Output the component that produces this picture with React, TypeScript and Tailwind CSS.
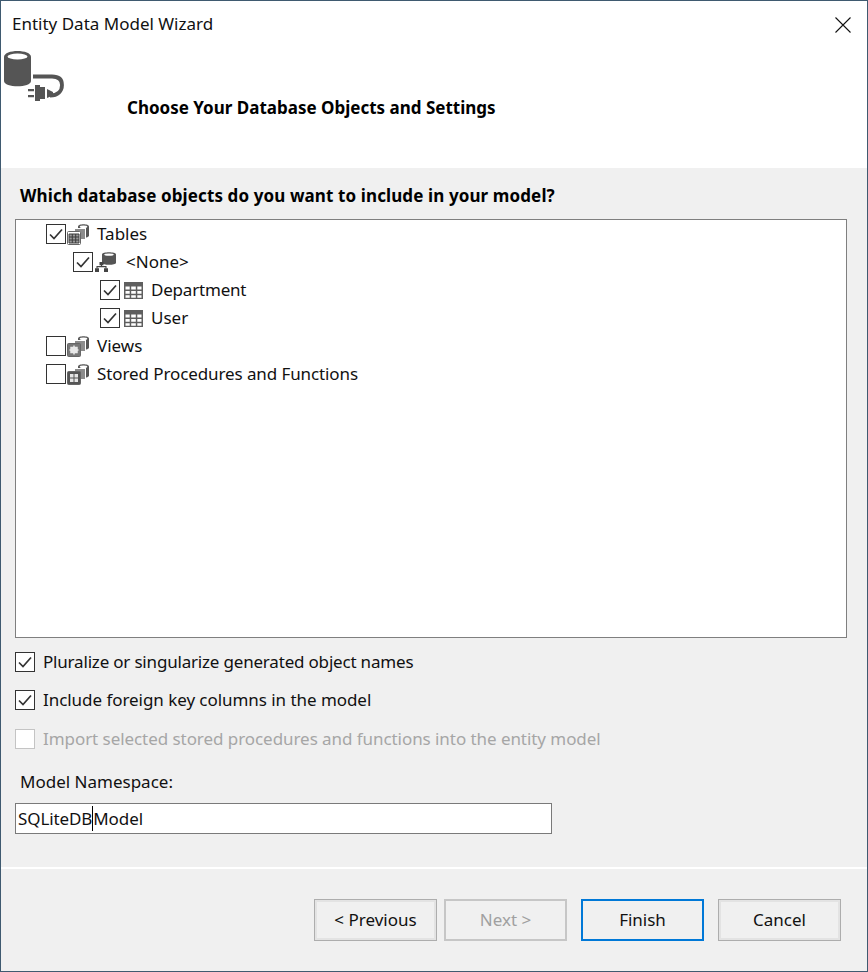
const font = { fontFamily: '"Noto Sans", "Open Sans", sans-serif' };

function Check({ checked = false, disabled = false }: { checked?: boolean; disabled?: boolean }) {
  return (
    <span className={`flex h-5 w-5 shrink-0 items-center justify-center border bg-white ${disabled ? 'border-[#c4c4c4]' : 'border-[#333333]'}`}>
      {checked && (
        <svg width="14" height="12" viewBox="0 0 14 12" fill="none">
          <path d="M1 6.5 L5 10.5 L13 1.5" stroke="#333333" strokeWidth="1.7" />
        </svg>
      )}
    </span>
  );
}

function DbSmall({ width = 11, height = 14 }: { width?: number; height?: number }) {
  return (
    <svg className="absolute right-0 top-0" width={width} height={height} viewBox="0 0 11 14" preserveAspectRatio="none">
      <path d="M0 2.5C0 -.5 11 -.5 11 2.5V11.5C11 14.5 0 14.5 0 11.5Z" fill="#555" />
      <ellipse cx="5.5" cy="2.8" rx="3.8" ry="1.3" fill="#fff" />
    </svg>
  );
}

function GroupIcon({ kind }: { kind: 'tables' | 'views' | 'procs' }) {
  return (
    <span className="relative block h-[21px] w-[22px] shrink-0">
      <DbSmall />
      <span className="absolute left-[7px] top-[4px] block h-[12px] w-[12px] border border-white bg-[#8c8c8c]" />
      <svg className="absolute bottom-0 left-0" width="14" height="14" viewBox="0 0 14 14">
        <rect x="0.5" y="0.5" width="13" height="13" rx="1" fill={kind === 'views' ? '#777' : kind === 'procs' ? '#555' : '#fff'} stroke="#666" />
        {kind === 'tables' && (
          <path d="M2 3H12V12H2Z M2 6H12 M2 9H12 M5.3 3V12 M8.7 3V12" fill="#999" stroke="#3d3d3d" strokeWidth="1" />
        )}
        {kind === 'views' && (
          <path d="M4 4.5H10V9.5H4Z M7 2.5V11.5 M2.5 7H11.5" fill="#e8e8e8" stroke="#e8e8e8" strokeWidth="1.5" />
        )}
        {kind === 'procs' && <path d="M3 3H6.5V6.5H3Z M7.5 3H11V6.5H7.5Z M3 7.5H6.5V11H3Z M7.5 7.5H11V11H7.5Z" fill="#e6e6e6" />}
      </svg>
    </span>
  );
}

function SchemaIcon() {
  return (
    <span className="relative ml-px block h-5 w-[21px] shrink-0">
      <DbSmall width={14} height={13} />
      <svg className="absolute bottom-0 left-0" width="13" height="10" viewBox="0 0 13 10">
        <path d="M4.5 0H8.5V3.2H4.5Z M0 6.2H4V10H0Z M9 6.2H13V10H9Z" fill="#444" />
        <path d="M6.5 3V5M2 6.5V4.6H11V6.5" stroke="#444" strokeWidth="1.1" fill="none" />
      </svg>
    </span>
  );
}

function TableIcon() {
  return (
    <svg className="ml-[3px] shrink-0" width="19" height="17" viewBox="0 0 19 17">
      <rect x="0" y="0" width="19" height="17" fill="#5f5f5f" />
      <path
        d="M1.5 4.5H5.7V7.5H1.5Z M7.2 4.5H11.8V7.5H7.2Z M13.3 4.5H17.5V7.5H13.3Z M1.5 9H5.7V11.7H1.5Z M7.2 9H11.8V11.7H7.2Z M13.3 9H17.5V11.7H13.3Z M1.5 13.2H5.7V15.7H1.5Z M7.2 13.2H11.8V15.7H7.2Z M13.3 13.2H17.5V15.7H13.3Z"
        fill="#fff"
      />
    </svg>
  );
}

function Row({ indent, col, checked, icon, label, textCls = '' }: { indent: string; col: string; checked?: boolean; icon: React.ReactNode; label: string; textCls?: string }) {
  return (
    <div className={`flex h-7 items-center ${indent}`}>
      <Check checked={checked} />
      <span className={`ml-px flex shrink-0 items-center ${col}`}>{icon}</span>
      <span className={`text-[#111] ${textCls}`}>{label}</span>
    </div>
  );
}

function Option({ label, checked, disabled, cls, textCls = '' }: { label: string; checked?: boolean; disabled?: boolean; cls: string; textCls?: string }) {
  return (
    <div className={`flex h-5 items-center gap-2 ${cls}`}>
      <Check checked={checked} disabled={disabled} />
      <span className={`${disabled ? 'text-[#a6a6a6]' : 'text-[#111]'} ${textCls}`}>{label}</span>
    </div>
  );
}

function Btn({ label, variant = 'normal', cls = '' }: { label: string; variant?: 'normal' | 'disabled' | 'focus'; cls?: string }) {
  const s =
    variant === 'focus'
      ? 'border-2 border-[#0078d7] text-[#111]'
      : variant === 'disabled'
        ? 'border-2 border-[#c6c6c6] text-[#a0a0a0]'
        : 'border border-[#adadad] text-[#111] shadow-[inset_0_0_0_2px_#e3e3e3]';
  return (
    <div className={`flex h-[42px] w-[123px] items-center justify-center bg-[#f0f0f0] ${s} ${cls}`}>{label}</div>
  );
}

export default function App() {
  return (
    <div className="flex h-[972px] w-[868px] flex-col border border-[#3f5a70] bg-white text-[17px] leading-6" style={font}>
      <div className="flex h-[47px] shrink-0 items-center justify-between pb-0.5 pl-[11px] pr-4">
        <span className="text-[#111]">Entity Data Model Wizard</span>
        <svg className="mt-0.5" width="16" height="16" viewBox="0 0 16 16">
          <path d="M.5 .5L15.5 15.5M15.5 .5L.5 15.5" stroke="#111" strokeWidth="1.1" />
        </svg>
      </div>
      <div className="flex h-[120px] shrink-0 pl-[3px]">
        <svg className="mt-[3px] shrink-0" width="60" height="50" viewBox="0 0 60 50">
          <path d="M0 6C0 -2 27 -2 27 6V30C27 37 0 37 0 30Z" fill="#555555" />
          <ellipse cx="13.5" cy="5.5" rx="10" ry="3" fill="#fff" />
          <path d="M29 25.5H48C55 25.5 58 29 58 34C58 40 54 44.5 46 44.5" fill="none" stroke="#555555" strokeWidth="3.8" />
          <path d="M43 38V47L49 44.5V41Z" fill="#555555" />
          <path d="M31 34H36V36H41V48H36V50H31Z" fill="#555555" />
          <path d="M24 38H30V40.2H24Z M24 44H30V46.2H24Z" fill="#555555" />
        </svg>
        <div className="ml-[63px] mt-[48px] font-bold text-[#000]">Choose Your Database Objects and Settings</div>
      </div>
      <div className="flex min-h-0 flex-1 flex-col bg-[#f0f0f0]">
        <div className="ml-[19px] mt-4 font-bold tracking-[0.11px] text-[#000]">Which database objects do you want to include in your model?</div>
        <div className="ml-[14px] mt-[11px] h-[419px] w-[832px] shrink-0 border border-[#7f7f7f] bg-white">
          <Row indent="pl-[30px]" col="w-[30px]" checked icon={<GroupIcon kind="tables" />} label="Tables" />
          <Row indent="pl-[57px]" col="w-[32px]" checked icon={<SchemaIcon />} label="<None>" />
          <Row indent="pl-[84px]" col="w-[30px]" checked icon={<TableIcon />} label="Department" textCls="tracking-[-0.2px]" />
          <Row indent="pl-[84px]" col="w-[30px]" checked icon={<TableIcon />} label="User" />
          <Row indent="pl-[30px]" col="w-[30px]" icon={<GroupIcon kind="views" />} label="Views" />
          <Row indent="pl-[30px]" col="w-[30px]" icon={<GroupIcon kind="procs" />} label="Stored Procedures and Functions" textCls="tracking-[-0.1px]" />
        </div>
        <Option cls="ml-[14px] mt-[14px]" checked label="Pluralize or singularize generated object names" textCls="tracking-[-0.19px]" />
        <Option cls="ml-[14px] mt-[18px]" checked label="Include foreign key columns in the model" textCls="tracking-[-0.05px]" />
        <Option cls="ml-[14px] mt-[19px]" disabled label="Import selected stored procedures and functions into the entity model" textCls="tracking-[-0.06px]" />
        <div className="ml-[19px] mt-[21px] text-[#111]">Model Namespace:</div>
        <div className="ml-[14px] mt-[9px] flex h-[31px] w-[537px] shrink-0 items-center border border-[#7a7a7a] bg-white pl-0.5 tracking-[-0.1px] text-[#111]">
          <span>SQLiteDB</span>
          <span className="h-[25px] w-px bg-black" />
          <span>Model</span>
        </div>
        <div className="mt-[33px] h-0.5 shrink-0 bg-white" />
        <div className="mt-[30px] flex justify-end pr-[26px]">
          <Btn label="< Previous" />
          <Btn cls="ml-[7px]" variant="disabled" label="Next >" />
          <Btn cls="ml-3.5" variant="focus" label="Finish" />
          <Btn cls="ml-3.5" label="Cancel" />
        </div>
      </div>
    </div>
  );
}
